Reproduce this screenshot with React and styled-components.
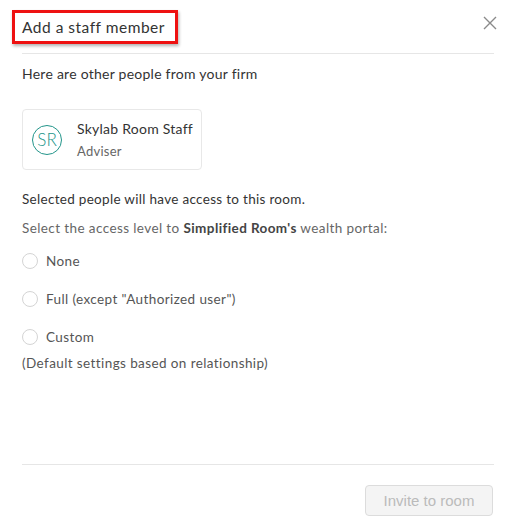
import React from 'react';
import styled, { createGlobalStyle } from 'styled-components';

const GlobalStyle = createGlobalStyle`
  body {
    margin: 0;
    background: #fff;
    font-family: Lato, "Open Sans", sans-serif;
    letter-spacing: 0.25px;
    color: #333;
  }
`;

const options = ['None', 'Full (except "Authorized user")', 'Custom'];

const App = () => {
  const [access, setAccess] = React.useState(null);
  return (
    <>
      <GlobalStyle />
      <Modal>
        <Header>
          <Highlight>
            <Title>Add a staff member</Title>
          </Highlight>
          <CloseButton aria-label="Close">
            <svg width="14" height="14" viewBox="0 0 14 14">
              <path d="M1 1L13 13M13 1L1 13" stroke="#8a8a8a" strokeWidth="1.4" />
            </svg>
          </CloseButton>
        </Header>

        <Body>
          <Intro>Here are other people from your firm</Intro>

          <PersonCard>
            <Avatar>SR</Avatar>
            <PersonInfo>
              <PersonName>Skylab Room Staff</PersonName>
              <PersonRole>Adviser</PersonRole>
            </PersonInfo>
          </PersonCard>

          <Notice>Selected people will have access to this room.</Notice>
          <Hint>
            Select the access level to <strong>Simplified Room's</strong> wealth portal:
          </Hint>

          <RadioList>
            {options.map((opt) => (
              <RadioRow key={opt} onClick={() => setAccess(opt)}>
                <RadioCircle $checked={access === opt} />
                {opt}
              </RadioRow>
            ))}
          </RadioList>
          <Note>(Default settings based on relationship)</Note>
        </Body>

        <Footer>
          <InviteButton disabled>Invite to room</InviteButton>
        </Footer>
      </Modal>
    </>
  );
};

export default App;

const Modal = styled.div`
  width: 515px;
  height: 528px;
  box-sizing: border-box;
  padding: 0 21px 0 22px;
  display: flex;
  flex-direction: column;
`;

const Header = styled.div`
  height: 54px;
  box-sizing: border-box;
  border-bottom: 1px solid #e6e6e6;
  display: flex;
  align-items: flex-start;
  justify-content: space-between;
  padding-top: 10px;
`;

const Highlight = styled.div`
  margin-left: -10px;
  width: 166px;
  height: 34px;
  box-sizing: border-box;
  border: 3px solid #ee1111;
  box-shadow: 1px 2px 3px rgba(0, 0, 0, 0.3);
  display: flex;
  align-items: center;
  padding-left: 7px;
`;

const Title = styled.h2`
  margin: 0;
  font-size: 15.5px;
  font-weight: 400;
  letter-spacing: 0.5px;
  color: #333;
  white-space: nowrap;
`;

const CloseButton = styled.button`
  border: 0;
  background: none;
  padding: 0;
  margin-top: 6px;
  margin-right: -3px;
  width: 14px;
  height: 14px;
  display: flex;
  cursor: pointer;
`;

const Body = styled.div`
  flex: 1;
  display: flex;
  flex-direction: column;
  align-items: flex-start;
  border-bottom: 1px solid #e6e6e6;
`;

const Intro = styled.p`
  margin: 11px 0 0;
  font-size: 14px;
  line-height: 17px;
  color: #333;
`;

const PersonCard = styled.div`
  margin-top: 27px;
  width: 180px;
  height: 61px;
  box-sizing: border-box;
  border: 1px solid #e8e8e8;
  border-radius: 4px;
  display: flex;
  align-items: center;
  padding-left: 9px;
  gap: 15px;
`;

const Avatar = styled.div`
  width: 30px;
  height: 30px;
  box-sizing: border-box;
  border: 1.5px solid #22958a;
  border-radius: 50%;
  color: #22958a;
  font-size: 17px;
  font-weight: 300;
  letter-spacing: 0;
  display: flex;
  align-items: center;
  justify-content: center;
  flex-shrink: 0;
`;

const PersonInfo = styled.div`
  display: flex;
  flex-direction: column;
  gap: 6px;
`;

const PersonName = styled.span`
  font-size: 14px;
  color: #333;
`;

const PersonRole = styled.span`
  font-size: 13px;
  color: #666;
`;

const Notice = styled.p`
  margin: 21px 0 0;
  font-size: 13.5px;
  line-height: 16px;
  letter-spacing: 0.3px;
  color: #333;
`;

const Hint = styled.p`
  margin: 13px 0 0;
  font-size: 13.5px;
  line-height: 16px;
  letter-spacing: 0.4px;
  color: #666;

  strong {
    font-weight: 700;
    color: #444;
  }
`;

const RadioList = styled.div`
  margin-top: 17px;
  display: flex;
  flex-direction: column;
  gap: 22px;
`;

const RadioRow = styled.label`
  display: flex;
  align-items: center;
  gap: 8px;
  font-size: 13.5px;
  line-height: 16px;
  letter-spacing: 0.4px;
  color: #555;
  cursor: pointer;
`;

const RadioCircle = styled.span`
  width: 16px;
  height: 16px;
  box-sizing: border-box;
  border: 1px solid ${(p) => (p.$checked ? '#22958a' : '#d4d4d4')};
  border-radius: 50%;
  background: ${(p) => (p.$checked ? 'radial-gradient(#22958a 40%, #fff 45%)' : '#fff')};
`;

const Note = styled.p`
  margin: 10px 0 0;
  font-size: 13.5px;
  line-height: 16px;
  letter-spacing: 0.4px;
  color: #555;
`;

const Footer = styled.div`
  height: 63px;
  display: flex;
  justify-content: flex-end;
  align-items: flex-start;
  padding-top: 20px;
  box-sizing: border-box;
`;

const InviteButton = styled.button`
  width: 128px;
  height: 31px;
  margin-right: 1px;
  border: 1px solid #dcdcdc;
  border-radius: 4px;
  background: #f4f4f4;
  color: #bbb;
  font-family: "Liberation Sans", Arial, sans-serif;
  font-size: 15px;
`;
